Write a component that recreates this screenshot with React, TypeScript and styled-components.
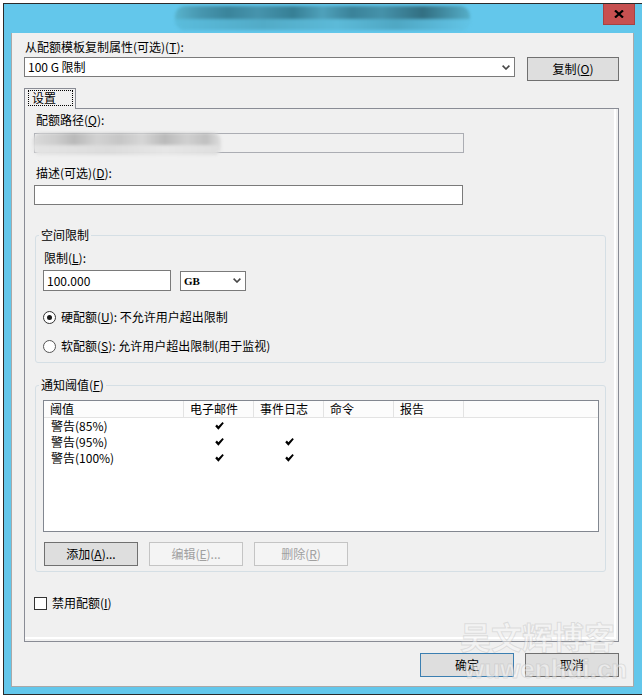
import styled, { createGlobalStyle } from "styled-components";

const GlobalStyle = createGlobalStyle`
  html, body {
    margin: 0;
    padding: 0;
    background: #ffffff;
  }
  body {
    font-family: "Noto Sans CJK SC", "Liberation Sans", sans-serif;
    font-size: 12px;
    line-height: 14px;
    color: #000000;
  }
`;

const Page = styled.div`
  padding: 3px 0 0 3px;
`;

const Window = styled.div`
  box-sizing: border-box;
  width: 639px;
  height: 692px;
  border: 1px solid #2a2a2a;
  border-right: none;
  background: #63c7eb;
  display: flex;
  flex-direction: column;
`;

const TitleBar = styled.div`
  height: 29px;
  display: flex;
  align-items: flex-start;
`;

const BlurTitle = styled.div`
  position: relative;
  width: 295px;
  height: 24px;
  margin: 2px 0 0 171px;
  border-radius: 10px;
  filter: blur(1.5px);
  background: linear-gradient(
    90deg,
    #58b3cd 0%,
    #4898b1 8%,
    #3a849b 18%,
    #4694ad 28%,
    #367f95 40%,
    #4fa1bb 50%,
    #3a8299 60%,
    #4592aa 70%,
    #326f82 84%,
    #55aec8 100%
  );
  &::after {
    content: "";
    position: absolute;
    left: 0;
    right: 0;
    bottom: 0;
    height: 11px;
    border-radius: 0 0 10px 10px;
    background: linear-gradient(90deg, #5abcdc, #52abc7 30%, #5cbad8 55%, #4fa7c3 75%, #62c4e6);
  }
`;

const CloseButton = styled.div`
  box-sizing: border-box;
  width: 32px;
  height: 21px;
  margin: 0 7px 0 auto;
  background: #c75050;
  border: 1px solid #a64242;
  border-top: none;
  display: flex;
  align-items: center;
  justify-content: center;
`;

const Client = styled.div`
  position: relative;
  box-sizing: border-box;
  width: 623px;
  height: 654px;
  margin-left: 7px;
  background: #f0f0f0;
  border: 1px solid #a9a9a9;
  border-top: none;
  padding: 7px 14px 0 12px;
`;

const Label = styled.div<{ $indent?: number; $gap?: number }>`
  height: 14px;
  margin-left: ${(p) => p.$indent ?? 0}px;
  margin-top: ${(p) => p.$gap ?? 0}px;
  white-space: nowrap;
`;

const TopRow = styled.div`
  display: flex;
  align-items: flex-start;
  gap: 12px;
  margin-top: 3px;
`;

const Combo = styled.div<{ $width: number; $height?: number }>`
  box-sizing: border-box;
  width: ${(p) => p.$width}px;
  height: ${(p) => p.$height ?? 20}px;
  border: 1px solid #7a7a7a;
  background: #ffffff;
  display: flex;
  align-items: center;
  justify-content: space-between;
  padding: 0 4px 0 3px;
`;

const UnitText = styled.span`
  font-family: "Liberation Serif", serif;
  font-size: 11px;
  font-weight: bold;
`;

const Button = styled.button<{ $variant?: "normal" | "primary" | "disabled"; $width?: number }>`
  box-sizing: border-box;
  width: ${(p) => p.$width ?? 94}px;
  height: 24px;
  margin: 0;
  padding: 0;
  font: inherit;
  line-height: 14px;
  background: ${(p) => (p.$variant === "disabled" ? "#f4f4f4" : "#dedede")};
  border: 1px solid
    ${(p) =>
      p.$variant === "primary" ? "#3c7fb1" : p.$variant === "disabled" ? "#c4c4c4" : "#707070"};
  color: ${(p) => (p.$variant === "disabled" ? "#a0a0a0" : "#000000")};
  display: flex;
  align-items: center;
  justify-content: center;
`;

const TabStrip = styled.div`
  margin-top: 7px;
  display: flex;
`;

const Tab = styled.div`
  position: relative;
  z-index: 1;
  box-sizing: border-box;
  width: 52px;
  height: 21px;
  margin-bottom: -1px;
  border: 1px solid #898c95;
  border-bottom: none;
  background: #f0f0f0;
  padding: 1px 0 0 3px;
`;

const FocusRect = styled.div`
  box-sizing: border-box;
  width: 45px;
  height: 16px;
  border: 1px dotted #000000;
  padding-left: 3px;
  line-height: 14px;
`;

const Panel = styled.div`
  box-sizing: border-box;
  width: 595px;
  height: 534px;
  border: 1px solid #898c95;
  box-shadow: inset -2px -2px 0 #f0f0f0, inset -4px -4px 0 #ffffff;
  padding: 4px 0 0 9px;
`;

const Field = styled.div<{ $disabled?: boolean; $width: number; $gap: number }>`
  position: relative;
  box-sizing: border-box;
  width: ${(p) => p.$width}px;
  height: 20px;
  margin-top: ${(p) => p.$gap}px;
  border: 1px solid ${(p) => (p.$disabled ? "#abadb3" : "#7a7a7a")};
  background: ${(p) => (p.$disabled ? "#f0f0f0" : "#ffffff")};
  padding: 0 3px;
  display: flex;
  align-items: center;
`;

const BlurPath = styled.div`
  position: absolute;
  left: -2px;
  top: -1px;
  width: 188px;
  height: 22px;
  border-radius: 8px;
  filter: blur(1.5px);
  background: linear-gradient(
    90deg,
    #dadada 0%,
    #cdcdcd 12%,
    #b9b9b9 22%,
    #d2d2d2 34%,
    #c6c6c6 46%,
    #d6d6d6 58%,
    #bababa 70%,
    #d0d0d0 82%,
    #c0c0c0 92%,
    #dedede 100%
  );
  &::after {
    content: "";
    position: absolute;
    left: 0;
    right: 0;
    bottom: 0;
    height: 10px;
    border-radius: 0 0 8px 8px;
    background: linear-gradient(90deg, #e4e4e4, #dcdcdc 40%, #e6e6e6 70%, #dedede);
  }
`;

const Group = styled.fieldset<{ $pad: string; $gap: number }>`
  box-sizing: border-box;
  width: 571px;
  min-inline-size: 0;
  margin: ${(p) => p.$gap}px 0 0 1px;
  padding: ${(p) => p.$pad};
  border: 1px solid #d5dfe5;
  border-radius: 3px;
`;

const Legend = styled.legend`
  height: 14px;
  line-height: 14px;
  padding: 0 2px;
  margin-left: -4px;
`;

const Row = styled.div<{ $gap: number }>`
  display: flex;
  align-items: center;
  margin-top: ${(p) => p.$gap}px;
  height: 14px;
`;

const LimitRow = styled.div`
  display: flex;
  align-items: center;
  gap: 9px;
  margin-top: 5px;
  height: 21px;
`;

const LimitInput = styled.div`
  box-sizing: border-box;
  width: 128px;
  height: 21px;
  border: 1px solid #7a7a7a;
  background: #ffffff;
  padding-left: 3px;
  display: flex;
  align-items: center;
`;

const RadioCircle = styled.span<{ $checked?: boolean }>`
  box-sizing: border-box;
  width: 13px;
  height: 13px;
  border-radius: 50%;
  border: 1px solid ${(p) => (p.$checked ? "#333333" : "#555555")};
  background: #ffffff;
  display: inline-flex;
  align-items: center;
  justify-content: center;
  margin-right: 5px;
  &::after {
    content: "";
    width: 5px;
    height: 5px;
    border-radius: 50%;
    background: ${(p) => (p.$checked ? "#1a1a1a" : "transparent")};
  }
`;

const CheckBox = styled.span`
  box-sizing: border-box;
  width: 13px;
  height: 13px;
  border: 1px solid #333333;
  background: #ffffff;
  margin-right: 5px;
`;

const ListView = styled.div`
  box-sizing: border-box;
  width: 556px;
  height: 132px;
  border: 1px solid #828790;
  background: #ffffff;
`;

const ListGrid = styled.div<{ $header?: boolean }>`
  display: grid;
  grid-template-columns: 140px 70px 70px 70px 70px;
  height: ${(p) => (p.$header ? 17 : 16)}px;
  background: ${(p) => (p.$header ? "#fcfcfc" : "transparent")};
  border-bottom: ${(p) => (p.$header ? "1px solid #e3e3e3" : "none")};
  box-sizing: border-box;
`;

const HeadCell = styled.div`
  box-sizing: border-box;
  border-right: 1px solid #e3e3e3;
  padding-left: 6px;
  line-height: 16px;
  white-space: nowrap;
`;

const Cell = styled.div<{ $center?: boolean }>`
  display: flex;
  align-items: center;
  justify-content: ${(p) => (p.$center ? "center" : "flex-start")};
  padding-left: ${(p) => (p.$center ? 0 : 7)}px;
  white-space: nowrap;
`;

const ButtonRow = styled.div<{ $gap: number; $end?: boolean }>`
  display: flex;
  gap: 11px;
  margin-top: ${(p) => p.$gap}px;
  margin-left: ${(p) => (p.$end ? 0 : 1)}px;
  justify-content: ${(p) => (p.$end ? "flex-end" : "flex-start")};
`;

const Watermark = styled.div`
  position: absolute;
  left: 448px;
  top: 585px;
  pointer-events: none;
  color: rgba(246, 246, 246, 0.5);
  -webkit-text-stroke: 1px rgba(165, 165, 165, 0.28);
  font-weight: bold;
  white-space: nowrap;
`;

const MarkTitle = styled.div`
  font-size: 31px;
  line-height: 36px;
`;

const MarkUrl = styled.div`
  font-family: "Liberation Sans", sans-serif;
  font-size: 26px;
  line-height: 30px;
  margin-left: 4px;
`;

const Chevron = () => (
  <svg width="8" height="5" viewBox="0 0 8 5">
    <path d="M0.6 0.6 L4 4 L7.4 0.6" fill="none" stroke="#474747" strokeWidth="1.6" />
  </svg>
);

const Check = () => (
  <svg width="9" height="8" viewBox="0 0 9 8">
    <path d="M0.2 4.2 L1.9 2.6 L3.4 4.3 L7.5 0 L8.8 1.3 L3.4 7.8 Z" fill="#000" />
  </svg>
);

const rows = [
  { name: "警告(85%)", email: true, log: false },
  { name: "警告(95%)", email: true, log: true },
  { name: "警告(100%)", email: true, log: true },
];

const columns = ["阈值", "电子邮件", "事件日志", "命令", "报告"];

export default function App() {
  return (
    <Page>
      <GlobalStyle />
      <Window>
        <TitleBar>
          <BlurTitle />
          <CloseButton>
            <svg width="10" height="8" viewBox="0 0 10 8">
              <path d="M1 0.5 L9 7.5 M9 0.5 L1 7.5" stroke="#000" strokeWidth="2.2" />
            </svg>
          </CloseButton>
        </TitleBar>
        <Client>
          <Label $indent={1}>
            从配额模板复制属性(可选)(<u>T</u>):
          </Label>
          <TopRow>
            <Combo $width={491}>
              <span>100 G 限制</span>
              <Chevron />
            </Combo>
            <Button $width={92}>
              复制(<u>O</u>)
            </Button>
          </TopRow>

          <TabStrip>
            <Tab>
              <FocusRect>设置</FocusRect>
            </Tab>
          </TabStrip>
          <Panel>
            <Label $indent={2}>
              配额路径(<u>Q</u>):
            </Label>
            <Field $disabled $width={430} $gap={6}>
              <BlurPath />
            </Field>
            <Label $indent={2} $gap={13}>
              描述(可选)(<u>D</u>):
            </Label>
            <Field $width={429} $gap={5} />

            <Group $pad="9px 7px 9px 7px" $gap={23}>
              <Legend>空间限制</Legend>
              <Label $indent={1}>
                限制(<u>L</u>):
              </Label>
              <LimitRow>
                <LimitInput>100.000</LimitInput>
                <Combo $width={66} $height={20}>
                  <UnitText>GB</UnitText>
                  <Chevron />
                </Combo>
              </LimitRow>
              <Row $gap={19}>
                <RadioCircle $checked />
                硬配额(<u>U</u>): 不允许用户超出限制
              </Row>
              <Row $gap={15}>
                <RadioCircle />
                软配额(<u>S</u>): 允许用户超出限制(用于监视)
              </Row>
            </Group>

            <Group $pad="8px 7px 5px 7px" $gap={15}>
              <Legend>
                通知阈值(<u>F</u>)
              </Legend>
              <ListView>
                <ListGrid $header>
                  {columns.map((c) => (
                    <HeadCell key={c}>{c}</HeadCell>
                  ))}
                </ListGrid>
                {rows.map((r) => (
                  <ListGrid key={r.name}>
                    <Cell>{r.name}</Cell>
                    <Cell $center>{r.email && <Check />}</Cell>
                    <Cell $center>{r.log && <Check />}</Cell>
                    <Cell />
                    <Cell />
                  </ListGrid>
                ))}
              </ListView>
              <ButtonRow $gap={10}>
                <Button>
                  添加(<u>A</u>)...
                </Button>
                <Button $variant="disabled">
                  编辑(<u>E</u>)...
                </Button>
                <Button $variant="disabled">
                  删除(<u>R</u>)
                </Button>
              </ButtonRow>
            </Group>

            <Row $gap={24}>
              <CheckBox />
              禁用配额(<u>I</u>)
            </Row>
          </Panel>

          <ButtonRow $gap={11} $end>
            <Button $variant="primary">确定</Button>
            <Button>取消</Button>
          </ButtonRow>

          <Watermark>
            <MarkTitle>吴文辉博客</MarkTitle>
            <MarkUrl>wuwenhui.cn</MarkUrl>
          </Watermark>
        </Client>
      </Window>
    </Page>
  );
}
